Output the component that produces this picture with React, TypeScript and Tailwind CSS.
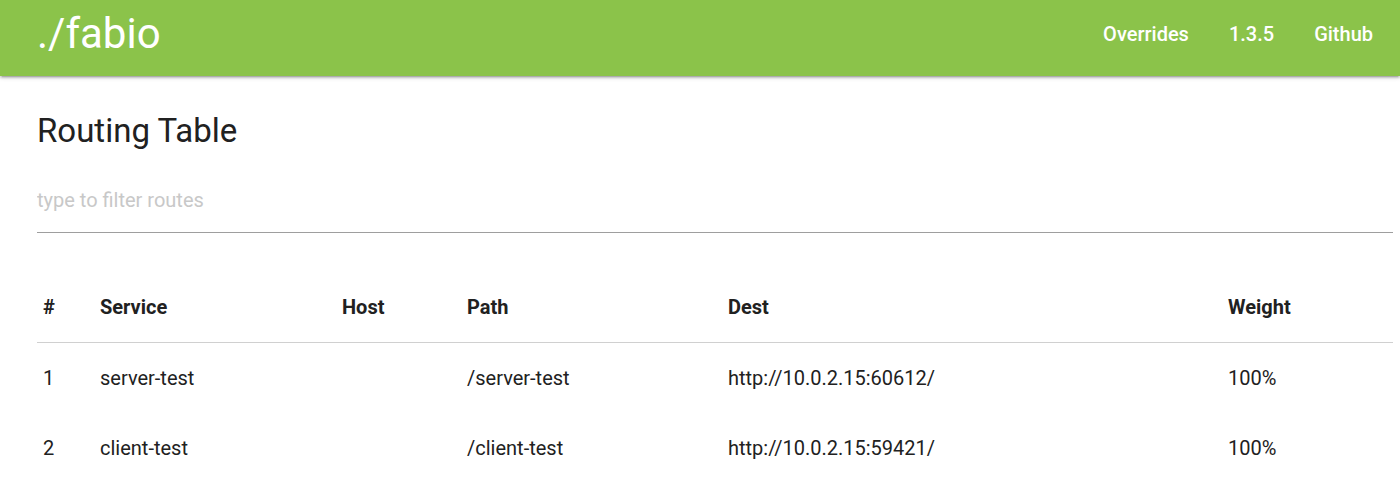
export default function App() {
  const routes = [
    { id: 1, service: "server-test", host: "", path: "/server-test", dest: "http://10.0.2.15:60612/", weight: "100%" },
    { id: 2, service: "client-test", host: "", path: "/client-test", dest: "http://10.0.2.15:59421/", weight: "100%" },
  ];

  return (
    <div className="min-h-screen bg-white font-['Roboto',sans-serif] text-[#212121]">
      <nav className="flex h-[76px] items-center justify-between bg-[#8bc34a] pb-[8px] pl-[37px] pr-[7px] text-white shadow-[0_2px_2px_0_rgba(0,0,0,0.14),0_3px_1px_-2px_rgba(0,0,0,0.12),0_1px_5px_0_rgba(0,0,0,0.2)]">
        <a className="text-[42px] leading-none">./fabio</a>
        <ul className="flex text-[20px] font-medium">
          <li className="px-[20px]">Overrides</li>
          <li className="px-[20px]">1.3.5</li>
          <li className="px-[20px]">Github</li>
        </ul>
      </nav>

      <main className="pl-[37px] pr-[7px]">
        <h4 className="pt-[31px] text-[33px] leading-[48px]">Routing Table</h4>

        <div className="mt-[33px] border-b border-[#9e9e9e] pb-[18px]">
          <input
            className="w-full text-[20px] leading-[24px] outline-none placeholder:text-[#c8c8c8]"
            placeholder="type to filter routes"
          />
        </div>

        <table className="mt-[38px] w-full table-fixed border-collapse text-left text-[20px] leading-[30px]">
          <thead>
            <tr className="border-b border-[#d0d0d0]">
              <th className="w-[57px] px-[6px] pb-[20px] pt-[21px] font-bold">#</th>
              <th className="w-[242px] px-[6px] pb-[20px] pt-[21px] font-bold">Service</th>
              <th className="w-[125px] px-[6px] pb-[20px] pt-[21px] font-bold">Host</th>
              <th className="w-[261px] px-[6px] pb-[20px] pt-[21px] font-bold">Path</th>
              <th className="w-[500px] px-[6px] pb-[20px] pt-[21px] font-bold">Dest</th>
              <th className="px-[6px] pb-[20px] pt-[21px] font-bold">Weight</th>
            </tr>
          </thead>
          <tbody>
            {routes.map((r) => (
              <tr key={r.id}>
                <td className="px-[6px] py-[20px]">{r.id}</td>
                <td className="px-[6px] py-[20px]">{r.service}</td>
                <td className="px-[6px] py-[20px]">{r.host}</td>
                <td className="px-[6px] py-[20px]">{r.path}</td>
                <td className="px-[6px] py-[20px]">{r.dest}</td>
                <td className="px-[6px] py-[20px]">{r.weight}</td>
              </tr>
            ))}
          </tbody>
        </table>
      </main>
    </div>
  );
}
